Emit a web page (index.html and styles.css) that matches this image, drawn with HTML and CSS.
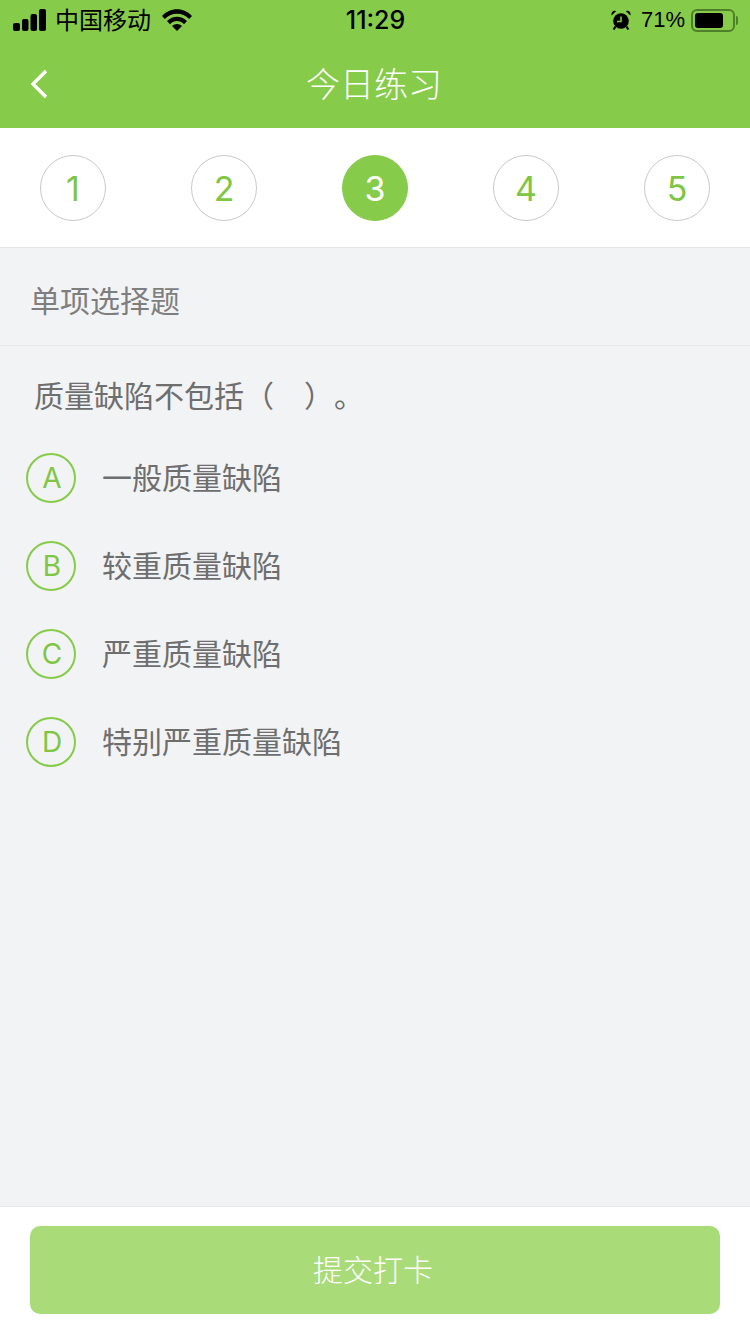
FILE: index.html
```html
<!DOCTYPE html>
<html>

<head>
    <meta charset="utf-8">
    <title>今日练习</title>
    <link rel="stylesheet" href="styles.css">
</head>

<body>
    <header class="top">
        <div class="status">
            <div class="status-left">
                <svg class="signal" width="33" height="22" viewBox="0 0 33 22">
                    <rect x="0" y="14" width="7" height="8" rx="2" />
                    <rect x="9" y="10" width="6.5" height="12" rx="2" />
                    <rect x="17.5" y="5" width="6.5" height="17" rx="2" />
                    <rect x="26" y="0" width="7" height="22" rx="2" />
                </svg>
                <span class="carrier">中国移动</span>
                <svg class="wifi" width="30" height="22" viewBox="0 0 30 22">
                    <path d="M0 7 C8 -2 22 -2 30 7 L27.2 10 C20.5 3 9.5 3 2.8 10 Z" />
                    <path d="M5 12 C10.5 6.2 19.5 6.2 25 12 L22 15.2 C18 11 12 11 8 15.2 Z" />
                    <path d="M10 17 C12.8 14.2 17.2 14.2 20 17 L15 22 Z" />
                </svg>
            </div>
            <div class="time">11:29</div>
            <div class="status-right">
                <svg class="alarm" width="20" height="20" viewBox="0 0 20 20">
                    <circle cx="10" cy="11" r="7.8" />
                    <path d="M0.6 5.4 L5 1.2 C2.6 -0.2 -0.2 2.2 0.6 5.4 Z" />
                    <path d="M19.4 5.4 L15 1.2 C17.4 -0.2 20.2 2.2 19.4 5.4 Z" />
                    <path d="M4.5 16.5 L2.6 19.6 M15.5 16.5 L17.4 19.6" stroke="#000" stroke-width="2" />
                    <path d="M10 6.5 V11.5 H6" fill="none" stroke="#86cb4a" stroke-width="1.6" />
                </svg>
                <span class="percent">71%</span>
                <div class="battery">
                    <div class="battery-fill"></div>
                </div>
                <div class="battery-tip"></div>
            </div>
        </div>
        <div class="nav">
            <svg class="back" width="18" height="30" viewBox="0 0 18 30">
                <path d="M16 2 L3 15 L16 28" fill="none" stroke="#fff" stroke-width="3.4" />
            </svg>
            <h1 class="nav-title">今日练习</h1>
        </div>
    </header>

    <div class="steps">
        <div class="step">1</div>
        <div class="step">2</div>
        <div class="step active">3</div>
        <div class="step">4</div>
        <div class="step">5</div>
    </div>

    <main class="content">
        <div class="type">单项选择题</div>
        <div class="question">质量缺陷不包括（　）。</div>
        <div class="option">
            <div class="letter">A</div>
            <span class="option-text">一般质量缺陷</span>
        </div>
        <div class="option">
            <div class="letter">B</div>
            <span class="option-text">较重质量缺陷</span>
        </div>
        <div class="option">
            <div class="letter">C</div>
            <span class="option-text">严重质量缺陷</span>
        </div>
        <div class="option">
            <div class="letter">D</div>
            <span class="option-text">特别严重质量缺陷</span>
        </div>
    </main>

    <footer class="bottom">
        <button class="submit">提交打卡</button>
    </footer>
</body>

</html>
```

FILE: styles.css
```css
* {
    box-sizing: border-box;
}

html,
body {
    margin: 0;
    padding: 0;
}

body {
    width: 750px;
    height: 1334px;
    display: flex;
    flex-direction: column;
    overflow: hidden;
    background-color: #f2f3f5;
    font-family: "Liberation Sans", "Noto Sans CJK SC", sans-serif;
    font-weight: 400;
    color: #6e6e6e;
    text-spacing-trim: space-all;
}

.top {
    height: 128px;
    background-color: #86cb4a;
}

.status {
    height: 40px;
    padding: 0 12px 0 13px;
    display: flex;
    justify-content: space-between;
    align-items: center;
    color: #000;
    font-size: 24px;
}

.status-left,
.status-right {
    width: 240px;
    display: flex;
    align-items: center;
}

.status-right {
    justify-content: flex-end;
}

.carrier {
    margin-left: 9px;
    padding-bottom: 4px;
}

.wifi {
    margin-left: 11px;
}

.time {
    font-family: Inter, sans-serif;
    font-weight: 500;
    font-size: 25px;
}

.percent {
    margin-left: 10px;
    font-size: 22px;
}

.battery {
    width: 44px;
    height: 23px;
    margin-left: 6px;
    padding: 2px;
    border: 2px solid #4e7f29;
    border-radius: 6px;
}

.battery-fill {
    width: 28px;
    height: 100%;
    background-color: #000;
    border-radius: 3px;
}

.battery-tip {
    width: 2px;
    height: 9px;
    margin-left: 1px;
    background-color: #4e7f29;
    border-radius: 0 2px 2px 0;
}

.nav {
    height: 88px;
    padding: 0 0 4px 30px;
    display: grid;
    grid-template-columns: 1fr auto 1fr;
    align-items: center;
}

.back {
    margin-top: 4px;
}

.nav-title {
    margin: 0 32px 0 0;
    font-size: 34px;
    font-weight: 300;
    color: #fff;
}

.steps {
    height: 120px;
    padding: 27px 40px 0;
    display: flex;
    justify-content: space-between;
    background-color: #fff;
    border-bottom: 1px solid #e6e6e6;
}

.step {
    width: 66px;
    height: 66px;
    display: flex;
    align-items: center;
    justify-content: center;
    border: 1px solid #c9c9c9;
    border-radius: 50%;
    font-family: Inter, sans-serif;
    font-size: 34px;
    color: #7fc645;
}

.step.active {
    background-color: #86cb4a;
    border-color: #86cb4a;
    color: #fff;
}

.content {
    flex: 1;
}

.type {
    height: 98px;
    padding: 4px 0 0 30px;
    display: flex;
    align-items: center;
    border-bottom: 1px solid #e6e8ea;
    font-size: 30px;
    color: #7e7e7e;
}

.question {
    height: 88px;
    padding: 8px 0 0 34px;
    display: flex;
    align-items: center;
    font-size: 30px;
}

.option {
    height: 88px;
    padding-left: 26px;
    display: flex;
    align-items: center;
    font-size: 30px;
}

.option-text {
    padding-bottom: 4px;
}

.letter {
    width: 50px;
    height: 50px;
    margin-right: 26px;
    padding-left: 2px;
    display: flex;
    align-items: center;
    justify-content: center;
    border: 2px solid #86cb4a;
    border-radius: 50%;
    font-family: Inter, sans-serif;
    font-size: 28px;
    color: #7fc645;
}

.bottom {
    height: 128px;
    padding: 19px 30px 0;
    background-color: #fff;
    border-top: 1px solid #e6e8ea;
}

.submit {
    width: 100%;
    height: 88px;
    padding: 0 4px 4px 0;
    border: none;
    border-radius: 10px;
    background-color: #a9dc78;
    color: #fff;
    font-family: inherit;
    font-weight: 300;
    font-size: 30px;
}
```
